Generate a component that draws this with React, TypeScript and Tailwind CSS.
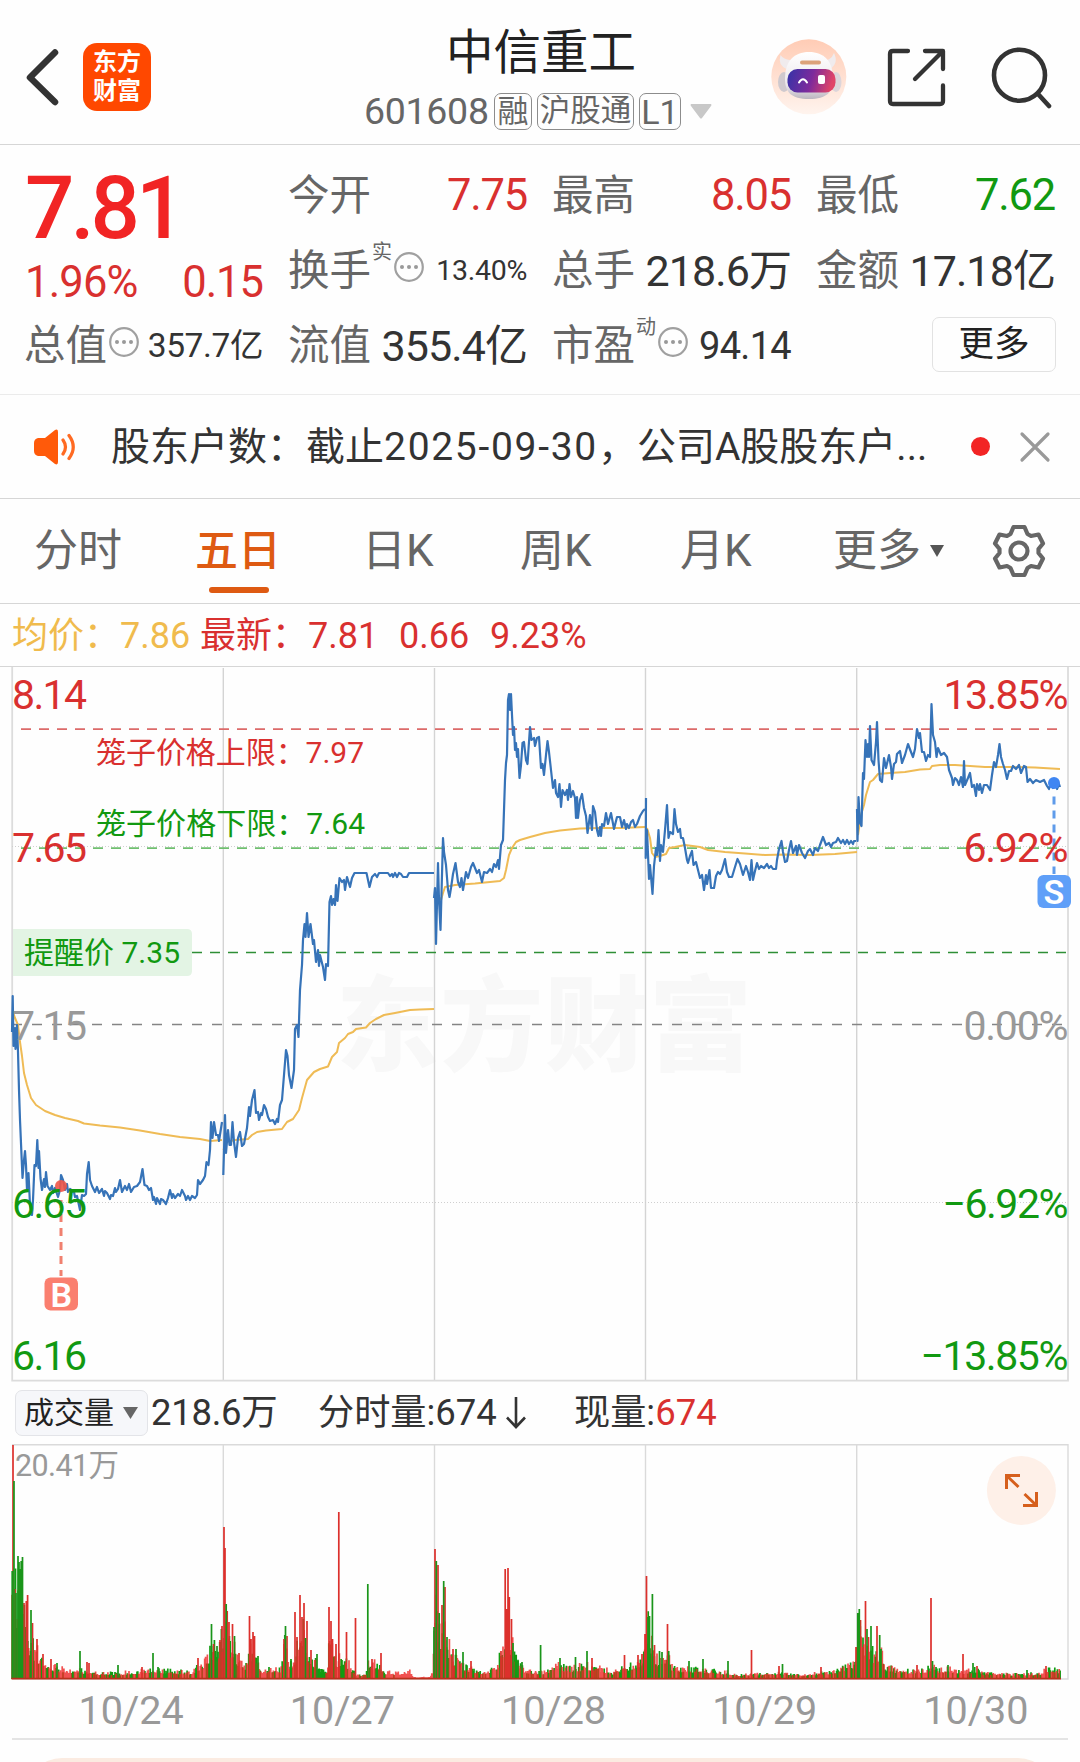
import type { ReactNode } from 'react';

type Point = [number, number];
type Spike = [number, number, 'r' | 'g'];

const RED = '#d9302f';
const GREEN = '#119911';

// One polyline per trading day, "x,y" pairs in page pixels
const priceLines = [
  '12,1032 12.7,996 13.5,1046 15,1028 15.5,1049 17,1025 18,1052 19,1090 20,1120 21.5,1155 22.5,1178 24,1160 25,1151 26,1165 27,1190 28.5,1173 30,1205 32,1215 33,1200 34.5,1165 36,1166 37.3,1140 38.5,1168 39,1151 40.5,1178 42,1190 44,1179 45,1187 46,1172 47.5,1186 50,1190 52,1186 53,1193 55,1188 58,1197 60,1190 61,1175 63,1180 65,1190 67,1184 68,1192 70,1189 74,1192 75,1197 77,1196 80,1210 82,1195 84,1196 86,1194 87,1174 88.7,1162 90,1180 92,1186 95,1192 97,1187 99,1193 102,1189 104,1196 105,1191 107,1193 110,1199 111,1195 113,1196 115,1188 116,1192 118,1189 120,1180 122,1192 125,1186 127,1190 129,1184 131,1192 134,1187 137,1186 140,1182 142.5,1169 144.5,1185 147,1186 149,1190 151,1188 153,1200 154,1197 156,1204 157,1198 160,1204 161,1199 163,1200 166,1204 168,1198 170,1190 172,1198 173,1194 175,1198 178,1194 180,1196 182,1190 185,1196 186,1200 188,1196 190,1200 192,1196 195,1198 197,1195 198,1180 200,1184 203,1180 205,1176 206.5,1162 208.5,1165 210,1150 211,1122 212.5,1138 214,1122 216,1135 218,1135 219,1141 222,1122',
  '223.3,1175 225,1115 226,1153 228,1130 229.5,1145 231,1145 232.5,1122 234,1142 236,1157 238,1138 240,1132 242,1146 244,1144 247,1128 249,1107 250,1116 252,1100 254.5,1090 256,1113 258,1112 259,1120 261,1113 262,1115 264,1105 266,1109 268,1117 270,1121 273,1120 275,1124 277,1119 278,1122 280,1105 282,1100 284,1075 286,1050 287.5,1056 289,1075 291.5,1088 294,1070 295,1029 297,1025 298.5,1037 300,990 302,965 303,940 304.5,924 305.5,937 307,913 308.5,937 310.5,924 313,944 314,940 316,962 318,950 319,966 320,955 323,967 325,980 326,964 328,966 329.5,902 331,896 332,905 333.5,899 335,905 336,885 337.5,901 339.5,878 342,882 344,880 345,890 347,877 350,887 352,878 354.5,873 366.5,873 369.5,887 372,877 375,874 377,877 379,873 388,873 390,876 392,874 393,877 395,873 397,877 399,873 401,874 403,877 407,877 409,873 434,873',
  '434,898 435,888 436,944 438,863 439,900 440.5,930 443,838 444,852 446,865 448,890 449.5,897 451,888 453,874 455.5,863 458,882 460,887 461.5,878 463,890 466,872 468,878 471,867 473,863 475,868 477,873 479,870 482,882 484,872 487,873 490,869 492,872 494,864 496,867 498,860 499,869 501,845 503,840 504,810 505,780 506,763 507,755 508,700 509,694 510,710 511,694 512,715 513,735 514,727 515,750 516,743 517,757 518,749 519.5,778 521,765 522.5,743 524,742 526,760 527.5,764 530,727 531.5,740 534,738 535,746 537,738 539,737 541,768 542.5,764 544,775 546,755 547.5,741 549,752 551,770 553,788 555,780 556,793 558,797 559.5,784 561,807 562.5,790 565,795 567,790 568,800 569.5,784 571,797 573,791 575,798 576,818 577,797 578,818 580,800 582,794 584,808 586,816 587.5,833 590,815 592,830 593,806 595,812 597,830 598.5,836 600,827 601,836 602,824 604,826 606,813 608,824 611,813 614,829 617,817 620,817 622,827 624,820 626,829 627,824 629,828 631,822 633,820 635,827 637,824 640,816 643,811 645,809',
  '646,798 645.7,858 647,830 649,879 650,865 652.5,894 654,866 656,848 657,855 658.5,830 660,861 661,845 663,852 665,830 667,805 668.5,838 670,832 673,834 674.5,809 676,824 678,832 680,829 681,838 683,838 685,848 687,860 688,863 690,856 692,851 693.5,865 696,862 698,870 700,878 702,875 704,890 706,875 707,884 709.5,870 711,888 714,888 716,876 718,872 720,874 722,870 725,859 727,872 729,877 732,877 735,867 737.5,859 740,864 743,875 746,866 748,872 750,880 751.5,860 753,880 755,871 757,863 759,869 761,866 764,868 767,864 769,868 771,866 773,869 776,869 777,860 779,849 781.5,841 783,852 785,862 787,861 789,850 791,841 793,853 796,846 797,855 799,845 802,853 805,858 808,851 810,849 813,855 815,848 818,851 820,845 823,837 826,845 829,843 831,847 833,843 836,842 838,838 841,843 843,840 845,844 847,840 849,844 851,841 853,844 854,841 856,841',
  '857,809 857.5,841 858.5,797 860,823 861.5,826 863,773 864,779 865.5,740 867,757 868,744 869,757 870,726 871.5,760 874,765 876,742 877,722 878.5,760 880,780 882,782 884,758 886,768 889,755 891,767 892,779 894,764 896,762 897,754 900,751 902,763 905,755 908,744 911,752 913,757 915,749 917,729 919,738 920,733 922,752 924,752 926,761 928,755 930,757 931.5,704 933,735 935,742 936.5,757 938,748 941,755 944,753 947,757 949,770 952,778 953,785 955,778 957,780 959,785 961,777 963,787 964,761 965,785 968,778 970,773 972,787 974,785 976,796 977,784 979,790 980,784 982,793 984,785 987,785 990,790 992,775 994,762 996,767 998,755 999.5,744 1001,757 1003,764 1005,770 1007,779 1009,771 1011,771 1013,766 1016,769 1019,765 1021,773 1024,766 1026,767 1027.5,782 1030,779 1033,783 1036,780 1040,782 1044,780 1047,786 1049,789 1051,782 1053,788 1055,783 1057,789 1059,784 1060,787',
];

const averageLines = [
  '13,1012 15,1018 18,1025 20,1042 22,1056 24,1073 27,1085 31,1098 36,1105 45,1111 55,1115 65,1118 78,1121 84,1123.5 100,1125.5 120,1127.5 140,1130.5 160,1134 180,1137 200,1139 210,1141 222,1140',
  '223.5,1150 226,1142 235,1140 248,1139 252,1135 257,1132 266,1130.5 282,1129 287,1122 293,1119 299,1110 302,1098 307,1080 314,1072 320,1069 328,1066.5 332,1057 337,1052 339,1043 345,1038 348,1034 353,1032 356,1029 366,1027.5 370,1023 376,1019 384,1015 395,1013 410,1010 420,1009.5 434,1009',
  '436,894 441,900 443,893 445,887 455,885 475,883.5 500,881 504,878 506,870 509,855 512,848 516,842 520,840 530,837 545,833 560,830.5 580,828.5 600,828 620,828 645,827',
  '647,828 650,838 652,853 655,857 660,856 666,854 669,848 675,847 685,845 700,847 708,850 725,852 745,853.5 765,855 785,854.5 810,855 835,854 857,852',
  '858,835 861,815 864,805 866,795 870,782 873,780 878,774 890,773 905,772 920,769.5 930,769 932,766 940,765 955,765 970,766 985,767 1010,767 1035,767.5 1060,769',
];

// Typical volume height along the axis, the spikes are listed separately
const volumeLevel: Point[] = [
  [12, 90], [16, 85], [22, 70], [26, 48], [30, 40], [34, 30], [38, 25], [45, 17], [55, 11], [65, 9], [80, 9], [90, 5], [120, 5], [150, 9], [190, 6], [200, 12], [207, 22], [212, 32], [218, 28], [221, 35],
  [224, 60], [230, 40], [236, 25], [245, 14], [250, 32], [256, 20], [262, 8], [275, 10], [281, 10], [285, 35], [289, 14], [294, 16], [298, 38], [304, 52], [308, 28], [315, 17], [322, 9], [327, 9], [330, 40], [335, 18], [342, 20], [350, 14], [356, 3], [365, 3], [369, 18], [380, 11], [386, 6], [400, 5], [410, 7], [413, 1], [430, 1], [433, 6],
  [435, 88], [440, 42], [445, 50], [450, 28], [458, 17], [470, 10], [480, 7], [495, 9], [500, 22], [505, 42], [511, 42], [516, 19], [525, 9], [540, 6], [548, 7], [556, 15], [570, 10], [588, 14], [600, 11], [612, 6], [625, 12], [640, 17], [644, 22],
  [647, 62], [652, 38], [656, 20], [666, 26], [672, 11], [690, 10], [705, 9], [715, 7], [728, 6], [735, 3], [755, 4], [775, 5], [785, 5], [800, 3], [818, 5], [840, 8], [850, 15], [855, 19],
  [858, 52], [864, 36], [870, 32], [875, 20], [880, 30], [886, 12], [900, 8], [920, 7], [931, 11], [940, 9], [950, 10], [960, 6], [975, 9], [985, 5], [1000, 5], [1015, 4], [1040, 5], [1050, 10], [1060, 8],
];

const volumeSpikes: Spike[] = [
  [12.2, 108, 'g'], [13, 234, 'r'], [14, 198, 'g'], [15, 90, 'r'], [16, 86, 'g'], [18, 123, 'g'], [19, 117, 'g'], [20, 110, 'g'], [21.2, 118, 'g'], [22.5, 122, 'g'], [24, 76, 'r'], [26.3, 78, 'r'], [27.6, 84, 'r'], [31, 69, 'g'], [32.5, 56, 'r'], [37, 40, 'r'], [43, 25, 'r'], [51, 20, 'r'], [57, 16, 'g'], [80, 28, 'g'], [87, 17, 'r'], [89, 16, 'r'], [118, 14, 'g'], [142, 12, 'r'], [153, 26, 'g'], [158, 12, 'g'], [198, 21, 'r'], [211.5, 55, 'g'], [213.5, 35, 'r'], [217, 33, 'g'], [220, 39, 'r'], [222, 53, 'r'],
  [224, 152, 'r'], [225, 131, 'r'], [226.2, 75, 'g'], [227.2, 68, 'r'], [229, 57, 'r'], [232.5, 55, 'r'], [234.5, 43, 'g'], [239, 26, 'r'], [249.5, 63, 'r'], [251, 40, 'r'], [253, 47, 'r'], [254.5, 43, 'r'], [258, 23, 'g'], [284, 40, 'r'], [285.5, 53, 'g'], [287, 43, 'r'], [291, 18, 'g'], [295, 67, 'r'], [297, 42, 'r'], [300, 84, 'r'], [302, 62, 'r'], [304, 76, 'r'], [305.5, 41, 'g'], [307, 58, 'r'], [311, 29, 'r'], [317, 25, 'g'], [329, 72, 'r'], [331, 58, 'r'], [332.5, 40, 'r'], [336, 35, 'r'], [338.8, 167, 'r'], [346.5, 47, 'r'], [355.5, 61, 'r'], [367.8, 95, 'g'], [372, 20, 'r'], [381, 26, 'r'],
  [434, 52, 'g'], [435, 130, 'r'], [436.3, 118, 'g'], [438, 114, 'r'], [439.2, 66, 'g'], [442, 74, 'r'], [443.7, 98, 'g'], [445, 92, 'r'], [447, 42, 'g'], [453, 30, 'r'], [456, 30, 'g'], [463, 27, 'g'], [471, 18, 'r'], [501, 28, 'r'], [505.2, 110, 'r'], [506.5, 70, 'r'], [508, 111, 'r'], [509.3, 82, 'r'], [511.5, 60, 'r'], [513, 36, 'g'], [518, 18, 'g'], [522, 17, 'g'], [540.6, 34, 'g'], [560, 21, 'g'], [575.5, 22, 'g'], [587, 28, 'g'], [592, 21, 'r'], [624.5, 24, 'r'], [638, 24, 'r'], [642, 25, 'r'],
  [645, 45, 'r'], [646.5, 103, 'r'], [648, 62, 'g'], [649.5, 63, 'g'], [652.4, 85, 'g'], [654.5, 34, 'r'], [659.5, 28, 'g'], [662, 27, 'g'], [667.5, 55, 'r'], [668.7, 28, 'g'], [689, 18, 'g'], [703, 20, 'g'], [728, 18, 'g'], [751.5, 29, 'r'], [779, 13, 'r'], [782.5, 15, 'g'], [821, 12, 'r'],
  [856, 32, 'r'], [857.8, 66, 'g'], [859.3, 70, 'g'], [860.5, 59, 'r'], [865.5, 78, 'r'], [867, 50, 'g'], [868.5, 42, 'r'], [871, 53, 'g'], [877, 53, 'r'], [879.7, 44, 'g'], [881, 30, 'g'], [917, 14, 'r'], [931, 81, 'r'], [932.5, 18, 'g'], [948, 14, 'g'], [963, 25, 'r'], [973, 16, 'g'], [977, 13, 'r'], [1027, 9, 'g'], [1046, 13, 'r'],
];

const days = ['10/24', '10/27', '10/28', '10/29', '10/30'];
const dividers = [223.3, 434.5, 645.5, 856.7];

const VOLUME_BASE = 1679;

function levelAt(x: number) {
  const next = volumeLevel.findIndex((p) => p[0] >= x);
  if (next <= 0) return volumeLevel[next === 0 ? 0 : volumeLevel.length - 1][1];
  const [x0, h0] = volumeLevel[next - 1];
  const [x1, h1] = volumeLevel[next];
  return h0 + ((h1 - h0) * (x - x0)) / (x1 - x0);
}

function noise(i: number) {
  const v = Math.sin(i * 127.1 + 11.7) * 43758.5453;
  return v - Math.floor(v);
}

const bars = Array.from({ length: 1192 }, (_, i): Spike => {
  const x = 12 + i * 0.88;
  const n = noise(i);
  const height = levelAt(x) * (0.55 + 0.75 * n * n) + 1;
  const redShare = x > 395 && x < 434 ? 1 : 0.54;
  return [x, height, noise(i + 5000) < redShare ? 'r' : 'g'];
});

function barPath(list: Spike[], side: 'r' | 'g') {
  return list
    .filter((b) => b[2] === side)
    .map(([x, h]) => `M${x.toFixed(1)} ${VOLUME_BASE}v${(-h).toFixed(1)}`)
    .join('');
}

const MoreDots = ({ className }: { className: string }) => (
  <svg viewBox="0 0 32 32" className={`w-[32px] h-[32px] shrink-0 ${className}`}>
    <circle cx="16" cy="16" r="13.8" fill="none" stroke="#a0a0a0" strokeWidth="2.2" />
    <g fill="#999">
      <circle cx="9" cy="16" r="2" />
      <circle cx="16" cy="16" r="2" />
      <circle cx="23" cy="16" r="2" />
    </g>
  </svg>
);

const Stat = ({ label, sup, more, value, className }: { label: string; sup?: string; more?: boolean; value: string; className: string }) => (
  <div className="flex h-[75px] items-center whitespace-nowrap">
    <span className="-ml-px text-[41.5px] leading-[50px] text-[#666]">{label}</span>
    {sup && <span className="-mt-[38px] ml-px w-[21px] text-[20px] leading-[24px] text-[#666]">{sup}</span>}
    {more && <MoreDots className={sup ? '-mt-[7px]' : '-mt-[7px] ml-px'} />}
    <span className={`ml-auto leading-[50px] ${className}`}>{value}</span>
  </div>
);

const Badge = ({ children, className }: { children: ReactNode; className: string }) => (
  <span className={`flex h-[37px] items-center justify-center rounded-[7px] border-[1.5px] border-[#8c8c8c] leading-none text-[#666] ${className}`}>
    {children}
  </span>
);

const Header = () => (
  <header className="flex h-[145px] border-b border-[#d6d6d6]">
    <div className="flex w-[364px] items-center pt-[10px] pl-[24px]">
      <svg viewBox="0 0 40 60" className="h-[60px] w-[40px]" fill="none" stroke="#333" strokeWidth="6.5" strokeLinecap="round" strokeLinejoin="round">
        <path d="M31 5.500 6 30.500 31 55" />
      </svg>
      <div className="ml-[19px] flex h-[68px] w-[68px] flex-col items-center justify-center rounded-[14px] bg-[#ff4800] text-[24px] leading-[29px] font-bold text-white">
        <span>东方</span>
        <span>财富</span>
      </div>
    </div>

    <div className="flex w-[352px] flex-col">
      <h1 className="mt-[25px] ml-[82px] text-[47.5px] leading-[56px] text-[#222]">中信重工</h1>
      <div className="mt-[12px] flex h-[37px] items-center">
        <span className="w-[130px] text-[37.5px] leading-[37px] tracking-[-0.3px] text-[#666]">601608</span>
        <Badge className="w-[38px] text-[31px]">融</Badge>
        <Badge className="ml-[5px] w-[97px] text-[30.5px]">沪股通</Badge>
        <Badge className="ml-[5px] w-[42px] text-[34px]">L1</Badge>
        <svg viewBox="0 0 22 15" className="ml-[9px] h-[15px] w-[22px]">
          <path d="M1 0H21Q22 1 21 2L12 14Q11 15 10 14L1 2Q0 1 1 0Z" fill="#c8c8c8" />
        </svg>
      </div>
    </div>

    <div className="flex items-center pt-[10px] pl-[55px]">
      <svg viewBox="771 40 76 76" className="h-[76px] w-[76px]">
        <defs>
          <linearGradient id="halo" x1="0" y1="0" x2="0" y2="1">
            <stop offset="0" stopColor="#ffccb5" />
            <stop offset="1" stopColor="#fff4ee" />
          </linearGradient>
          <linearGradient id="visor" x1="0" y1="0" x2="1" y2="0.15">
            <stop offset="0" stopColor="#3433a8" />
            <stop offset="0.55" stopColor="#7d2a9c" />
            <stop offset="1" stopColor="#e04468" />
          </linearGradient>
          <linearGradient id="shell" x1="0" y1="0" x2="0" y2="1">
            <stop offset="0" stopColor="#fff" />
            <stop offset="0.7" stopColor="#ece8ec" />
            <stop offset="1" stopColor="#bcb6c0" />
          </linearGradient>
        </defs>
        <circle cx="808.8" cy="77.8" r="37.5" fill="url(#halo)" />
        <ellipse cx="784" cy="83" rx="6" ry="10" fill="#cfc9ce" />
        <ellipse cx="836" cy="83" rx="5.5" ry="10" fill="#dcd5da" />
        <path d="M780.500 56q-3 10 6 14l8-9q-10 1-14-5ZM834 54q5 10-4 16l-8-8q9 0 12-8Z" fill="#f0ebed" />
        <path d="M785 80c0-18 9-27 24-27s24 9 24 27c0 13-6 20-24 20s-24-7-24-20Z" fill="url(#shell)" />
        <rect x="800" y="61.5" width="21" height="4" rx="2" fill="#dca27a" />
        <rect x="787.5" y="70" width="48" height="23.5" rx="10" fill="url(#visor)" />
        <path d="M799 83.500q4-6.500 8 0" fill="none" stroke="#fff" strokeWidth="2" strokeLinecap="round" />
        <rect x="818" y="76" width="7" height="9" rx="2" fill="#fff" />
      </svg>
      <svg viewBox="886 47 61 61" className="ml-[39px] h-[61px] w-[61px]" fill="none" stroke="#333" strokeWidth="4.3" strokeLinecap="round" strokeLinejoin="round">
        <path d="M908 51H893q-3 0-3 3V101q0 3 3 3H940q3 0 3-3V85.500M925 51H943V69M942 52 915 79" />
      </svg>
      <svg viewBox="989 45 63 63" className="ml-[43px] h-[63px] w-[63px]" fill="none" stroke="#333" strokeWidth="4.6" strokeLinecap="round">
        <circle cx="1018.5" cy="74.2" r="25.5" />
        <path d="M1037.500 93.500 1048 105" />
      </svg>
    </div>
  </header>
);

const Quote = () => (
  <section className="grid h-[250px] grid-cols-4 gap-x-[26px] border-b border-[#ebebeb] px-[25px] pt-[13px] text-[#333]">
    <div>
      <div className="flex h-[100px] items-center text-[87px] leading-none font-medium tracking-[-4px] text-[#f12424]">7.81</div>
      <div className="flex h-[50px] items-center justify-between text-[43.5px] leading-none text-[#d9302f]">
        <span className="tracking-[-0.8px]">1.96%</span>
        <span className="tracking-[-1px]">0.15</span>
      </div>
      <Stat label="总值" more value="357.7亿" className="text-[33.5px] tracking-[-0.4px]" />
    </div>
    <div>
      <Stat label="今开" value="7.75" className="text-[43.5px] tracking-[-1.2px] text-[#d9302f]" />
      <Stat label="换手" sup="实" more value="13.40%" className="text-[28.5px] tracking-[-0.3px]" />
      <Stat label="流值" value="355.4亿" className="text-[43px] tracking-[-0.9px]" />
    </div>
    <div>
      <Stat label="最高" value="8.05" className="text-[43.5px] tracking-[-1.2px] text-[#d9302f]" />
      <Stat label="总手" value="218.6万" className="text-[43px] tracking-[-0.9px]" />
      <Stat label="市盈" sup="动" more value="94.14" className="text-[38px] tracking-[-0.7px]" />
    </div>
    <div>
      <Stat label="最低" value="7.62" className="text-[43.5px] tracking-[-1.2px] text-[#119911]" />
      <Stat label="金额" value="17.18亿" className="text-[43px] tracking-[-0.9px]" />
      <button className="mt-[9px] -mr-px ml-auto flex h-[55px] w-[124px] items-center justify-center rounded-[7px] border-[1.5px] border-[#e2e2e2] text-[35.5px] leading-none text-[#222]">
        更多
      </button>
    </div>
  </section>
);

const News = () => (
  <section className="flex h-[104px] items-center border-b border-[#d6d6d6] pl-[33px]">
    <svg viewBox="0 0 46 38" className="h-[38px] w-[46px]">
      <path d="M5 10h7L22 2q3-1.500 3 2V34q0 3.500-3 2L12 28H5q-4-1-4-5V15q0-4 4-5Z" fill="#ff5a0a" />
      <path d="M30 12q5 7 0 14M36 7.500q8.500 11.500 0 23" fill="none" stroke="#ff6a22" strokeWidth="3.2" strokeLinecap="round" />
    </svg>
    <p className="ml-[32px] flex w-[860px] text-[39px] leading-[50px] whitespace-nowrap text-[#333]">
      股东户数：截止<span className="tracking-[1.7px]">2025-09-30</span>，公司A股股东户...
    </p>
    <span className="h-[19px] w-[19px] rounded-full bg-[#f22424]" />
    <svg viewBox="0 0 32 32" className="ml-[29px] h-[32px] w-[32px]" stroke="#999" strokeWidth="3.2" strokeLinecap="round">
      <path d="M3 3 29 29M29 3 3 29" />
    </svg>
  </section>
);

const Tabs = () => (
  <nav className="flex h-[105px] items-center border-b border-[#d6d6d6] pl-[34px] text-[44px] leading-[56px] whitespace-nowrap text-[#666]">
    <span className="w-[161px]">分时</span>
    <span className="relative w-[167px] text-[43px] font-medium text-[#de5a12]">
      五日
      <i className="absolute top-[64px] left-[14px] h-[6px] w-[60px] rounded-full bg-[#de5a12]" />
    </span>
    <span className="w-[158px]">日K</span>
    <span className="w-[160px]">周K</span>
    <span className="w-[153px]">月K</span>
    <span className="w-[97px]">更多</span>
    <svg viewBox="0 0 14 12" className="h-[12px] w-[14px]">
      <path d="M0 0H14L7 12Z" fill="#555" />
    </svg>
    <svg viewBox="-28 -28 56 56" className="-mt-px ml-[47px] h-[56px] w-[56px]" fill="none" stroke="#666" strokeWidth="4.2" strokeLinejoin="round">
      <path d="M-5.500-24H5.500L8.500-17 12-15 19.500-16.500 24-7.500 19.500-2V2L24 7.500 19.500 16.500 12 15 8.500 17 5.500 24H-5.500L-8.500 17-12 15-19.500 16.500-24 7.500-19.500 2V-2L-24-7.500-19.500-16.500-12-15-8.500-17Z" />
      <circle r="8.5" />
    </svg>
  </nav>
);

const AxisLabel = ({ y, left, right, rightWidth, color }: { y: number; left: string; right: string; rightWidth: number; color: string }) => (
  <g fill={color} fontSize="41">
    <text x="12" y={y} textLength="75">{left}</text>
    <text x="1068.5" y={y} textAnchor="end" textLength={rightWidth}>{right}</text>
  </g>
);

const PriceChart = () => (
  <svg viewBox="0 667 1080 715" className="block h-[715px] w-[1080px]">
    <text x="336" y="1063" fontSize="103" fontWeight="900" fill="#f8f8f8" textLength="416">东方财富</text>

    <g stroke="#d4d4d4" strokeWidth="1.4">
      {dividers.map((x) => (
        <path key={x} d={`M${x} 668V1380`} />
      ))}
    </g>
    <path d="M12.200 667V1380.700H1068V667" fill="none" stroke="#dcdcdc" strokeWidth="1.8" />
    <g stroke="#cfcfcf" strokeWidth="1" strokeDasharray="1 2">
      <path d="M12 846.500H1068M12 1202.500H1068" />
    </g>

    <path d="M21 729.200H1058" stroke="#dc6a69" strokeWidth="1.7" strokeDasharray="10 8" />
    <path d="M21 848.200H1058" stroke="#6fbf6f" strokeWidth="1.7" strokeDasharray="10 8" />
    <path d="M192 952.500H1067" stroke="#2e8f36" strokeWidth="1.3" strokeDasharray="10 8" />
    <path d="M12 1024.500H1064" stroke="#858585" strokeWidth="1.7" strokeDasharray="10 10" />

    <g fill="none" stroke="#efbb55" strokeWidth="2" strokeLinejoin="round">
      {averageLines.map((points, i) => (
        <polyline key={i} points={points} />
      ))}
    </g>
    <g fill="none" stroke="#3673b8" strokeWidth="2.2" strokeLinejoin="round">
      {priceLines.map((points, i) => (
        <polyline key={i} points={points} />
      ))}
    </g>

    {/* Buy and sell marks */}
    <circle cx="61" cy="1186" r="6" fill="#ee5548" fillOpacity="0.9" />
    <path d="M61 1200V1276" stroke="#f0806f" strokeWidth="3" strokeDasharray="8 6" />
    <circle cx="1054" cy="783" r="6" fill="#3f86f2" />
    <path d="M1054 796.500V874" stroke="#5f9bea" strokeWidth="3" strokeDasharray="8 6" />

    <AxisLabel y={709} left="8.14" right="13.85%" rightWidth={125} color={RED} />
    <AxisLabel y={862} left="7.65" right="6.92%" rightWidth={105} color={RED} />
    <AxisLabel y={1040} left="7.15" right="0.00%" rightWidth={105} color="#999" />
    <AxisLabel y={1218} left="6.65" right="−6.92%" rightWidth={126} color={GREEN} />
    <AxisLabel y={1370} left="6.16" right="−13.85%" rightWidth={148} color={GREEN} />

    <text x="96" y="763" fontSize="30" fill={RED} textLength="268">笼子价格上限：7.97</text>
    <text x="96" y="833.5" fontSize="30" fill={GREEN} textLength="269">笼子价格下限：7.64</text>

    <path d="M13 929H187q5 0 5 5V971q0 5-5 5H13Z" fill="#e3f4e4" />
    <text x="24" y="963" fontSize="30" fill={GREEN} textLength="156">提醒价 7.35</text>

    <g fill="#fff" fontSize="34" fontWeight="600" textAnchor="middle">
      <rect x="44.5" y="1277.5" width="33.5" height="33" rx="6" fill="#fa7f6f" />
      <text x="61.3" y="1306.5">B</text>
      <rect x="1037.5" y="875" width="33.5" height="33" rx="6" fill="#5f9ff8" />
      <text x="1054" y="903.5">S</text>
    </g>
  </svg>
);

const VolumeBar = () => (
  <div className="flex h-[62px] items-center pl-[15px] text-[36.5px] leading-[46px] whitespace-nowrap text-[#333]">
    <button className="flex h-[46px] w-[133px] items-center rounded-[7px] border border-[#e3e4e8] bg-[#f6f7fa] pl-[8px] text-[30px] leading-[36px] text-[#222]">
      成交量
      <svg viewBox="0 0 15 12" className="ml-[9px] h-[12px] w-[15px]">
        <path d="M0 0H15L7.500 12Z" fill="#666" />
      </svg>
    </button>
    <span className="ml-[3px] w-[167px] tracking-[-0.3px]">218.6万</span>
    <span className="w-[188px]">
      <span className="text-[36.2px]">分时量:</span>674
    </span>
    <svg viewBox="0 0 20 32" className="h-[32px] w-[20px]" fill="none" stroke="#333" strokeWidth="2.6">
      <path d="M10 0V30M1 20.500 10 30 19 20.500" />
    </svg>
    <span className="ml-[48px]">
      <span className="text-[36.2px]">现量:</span><span className="text-[#d9302f]">674</span>
    </span>
  </div>
);

const VolumeChart = () => (
  <svg viewBox="0 1444 1080 237" className="block h-[237px] w-[1080px]">
    <g fill="none" stroke="#dadada" strokeWidth="1.4">
      <path d="M12 1444.700H1068V1679H12" />
      {dividers.map((x) => (
        <path key={x} d={`M${x} 1444V1679`} />
      ))}
    </g>
    <g strokeWidth="1.7">
      <path d={barPath(bars, 'g')} stroke="#119c11" />
      <path d={barPath(bars, 'r')} stroke="#ee2624" strokeOpacity="0.8" />
      <path d={barPath(volumeSpikes, 'r')} stroke="#dc302c" />
      <path d={barPath(volumeSpikes, 'g')} stroke="#1a951a" />
      <path d="M11.500 1678.700H1061" stroke="#b8301c" />
    </g>
    <text x="15" y="1476" fontSize="30.5" fill="#999" textLength="104">20.41万</text>
    <circle cx="1021.4" cy="1490.5" r="34.5" fill="#fef0e8" />
    <path d="M1020 1475.500H1006.500V1489M1006.500 1475.500 1018.500 1487M1023 1505.500H1036.500V1492M1036.500 1505.500 1024.500 1494" fill="none" stroke="#d65f1c" strokeWidth="3" />
  </svg>
);

export default function App() {
  return (
    <div className="h-[1762px] w-[1080px] overflow-hidden bg-[#fefefe] font-['Roboto','Noto_Sans_CJK_SC',sans-serif]">
      <Header />
      <Quote />
      <News />
      <Tabs />
      <div className="flex h-[63px] items-center border-b border-[#d6d6d6] pt-px pl-[12px] text-[36px] leading-[46px] whitespace-nowrap text-[#d9302f]">
        <span className="w-[188px] text-[#f0bb4d]">均价：7.86</span>
        <span className="w-[199px]">最新：7.81</span>
        <span className="w-[91px]">0.66</span>
        <span>9.23%</span>
      </div>
      <PriceChart />
      <VolumeBar />
      <VolumeChart />
      <div className="mx-[12px] flex h-[59px] border-b-2 border-[#e4e4e4] text-[39.5px] leading-[60px] text-[#999]">
        {days.map((day) => (
          <span key={day} className="flex-1 pl-[27px] text-center">{day}</span>
        ))}
      </div>
      <div className="mx-[26px] mt-[18px] h-[80px] rounded-[36px] bg-[#fbebe1]" />
    </div>
  );
}
